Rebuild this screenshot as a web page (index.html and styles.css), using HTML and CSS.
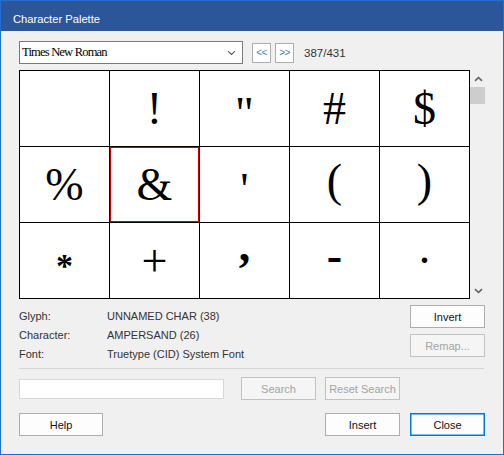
FILE: index.html
```html
<!DOCTYPE html>
<html>
<head>
<meta charset="utf-8">
<link rel="stylesheet" href="styles.css">
</head>
<body>
<div class="window">
  <div class="titlebar">Character Palette</div>
  <div class="content">
    <div class="toolbar">
      <div class="select">
        <span class="select-text">Times New Roman</span>
        <svg class="chev" width="9" height="6" viewBox="0 0 9 6"><path d="M1 1.2 L4.5 4.5 L8 1.2" fill="none" stroke="#555" stroke-width="1.1"/></svg>
      </div>
      <button class="nav">&lt;&lt;</button>
      <button class="nav nav-second">&gt;&gt;</button>
      <span class="count">387/431</span>
    </div>

    <div class="grid-row">
      <div class="grid">
        <div class="cell"></div>
        <div class="cell">!</div>
        <div class="cell g-quote">"</div>
        <div class="cell">#</div>
        <div class="cell">$</div>
        <div class="cell">%</div>
        <div class="cell selected">&amp;</div>
        <div class="cell g-quote">'</div>
        <div class="cell g-paren">(</div>
        <div class="cell g-paren">)</div>
        <div class="cell g-star">*</div>
        <div class="cell">+</div>
        <div class="cell g-comma">,</div>
        <div class="cell g-hyphen">-</div>
        <div class="cell g-period">.</div>
      </div>
      <div class="scrollbar">
        <div class="sb-arrow">
          <svg width="9" height="6" viewBox="0 0 9 6"><path d="M1 4.8 L4.5 1.5 L8 4.8" fill="none" stroke="#606060" stroke-width="1.6"/></svg>
        </div>
        <div class="sb-thumb"></div>
        <div class="sb-track"></div>
        <div class="sb-arrow">
          <svg width="9" height="6" viewBox="0 0 9 6"><path d="M1 1.2 L4.5 4.5 L8 1.2" fill="none" stroke="#606060" stroke-width="1.6"/></svg>
        </div>
      </div>
    </div>

    <div class="info-row">
      <div class="info">
        <div class="info-line"><span class="label">Glyph:</span><span class="value">UNNAMED CHAR (38)</span></div>
        <div class="info-line"><span class="label">Character:</span><span class="value">AMPERSAND (26)</span></div>
        <div class="info-line"><span class="label">Font:</span><span class="value">Truetype (CID) System Font</span></div>
      </div>
      <div class="side-buttons">
        <button class="btn">Invert</button>
        <button class="btn disabled">Remap...</button>
      </div>
    </div>

    <div class="separator"></div>

    <div class="search-row">
      <div class="search-input"></div>
      <button class="btn disabled search-btn">Search</button>
      <button class="btn disabled reset-btn">Reset Search</button>
    </div>

    <div class="bottom-row">
      <button class="btn help-btn">Help</button>
      <div class="bottom-right">
        <button class="btn">Insert</button>
        <button class="btn default">Close</button>
      </div>
    </div>
  </div>
</div>
</body>
</html>
```

FILE: styles.css
```css
* {
  box-sizing: border-box;
}

html, body {
  margin: 0;
  padding: 0;
  background: #f0f0f0;
}

.window {
  width: 504px;
  height: 455px;
  border: 1px solid #1f6fd4;
  background: #f0f0f0;
  font-family: "Liberation Sans", Arial, sans-serif;
  font-size: 11px;
  color: #222;
  display: flex;
  flex-direction: column;
}

.titlebar {
  height: 30px;
  background: #2b579a;
  color: #ffffff;
  padding: 12px 0 0 12px;
  line-height: 13px;
  font-size: 11.2px;
}

.content {
  padding: 10px 18px 0 18px;
  display: flex;
  flex-direction: column;
}

/* toolbar */
.toolbar {
  display: flex;
  align-items: center;
  height: 23px;
}

.select {
  width: 224px;
  height: 23px;
  background: #ffffff;
  border: 1px solid #7a7a7a;
  display: flex;
  align-items: center;
  justify-content: space-between;
  padding: 0 6px 0 2px;
}

.select-text {
  font-family: "Liberation Serif", "Times New Roman", serif;
  font-size: 12.5px;
  color: #000;
  letter-spacing: -0.8px;
}

.chev {
  display: block;
}

.nav {
  width: 19px;
  height: 20px;
  margin: 0 0 0 9px;
  padding: 0;
  border: 1px solid #adadad;
  background: #ffffff;
  font-family: "Liberation Sans", Arial, sans-serif;
  font-size: 10px;
  color: #4a7ab0;
  line-height: 18px;
  letter-spacing: -0.5px;
}

.nav-second {
  margin-left: 4px;
}

.count {
  margin-left: 10px;
  color: #333;
  font-size: 11.5px;
}

/* grid */
.grid-row {
  display: flex;
  margin-top: 6px;
}

.grid {
  display: grid;
  grid-template-columns: repeat(5, 90px);
  grid-template-rows: repeat(3, 76px);
  width: 451px;
  height: 229px;
  border-left: 1px solid #000;
  border-top: 1px solid #000;
  background: #ffffff;
}

.cell {
  border-right: 1px solid #000;
  border-bottom: 1px solid #000;
  display: flex;
  align-items: center;
  justify-content: center;
  font-family: "Liberation Serif", "Times New Roman", serif;
  font-size: 46px;
  line-height: 52px;
  color: #000;
}

.cell.selected {
  box-shadow: inset 0 0 0 1px #d40000;
}

/* per-glyph placement as drawn by the palette's font */
.g-quote {
  padding-top: 10px;
}

.g-paren {
  padding-bottom: 8px;
}

.g-star {
  font-size: 34px;
  line-height: 38px;
  font-weight: bold;
  padding-top: 10px;
}

.g-comma {
  padding-bottom: 30px;
  line-height: 30px;
  font-weight: bold;
}

.g-hyphen {
  font-weight: bold;
  padding-bottom: 10px;
  line-height: 40px;
}

.g-period {
  padding-bottom: 26px;
  line-height: 30px;
}

.scrollbar {
  width: 15px;
  height: 229px;
  display: flex;
  flex-direction: column;
}

.sb-arrow {
  height: 17px;
  display: flex;
  align-items: center;
  justify-content: center;
  padding-left: 1px;
}

.sb-thumb {
  height: 17px;
  background: #cdcdcd;
}

.sb-track {
  flex: 1;
}

/* info */
.info-row {
  display: flex;
  margin-top: 6px;
  height: 52px;
}

.info {
  flex: 1;
  padding-top: 2px;
}

.info-line {
  display: flex;
  line-height: 19px;
  color: #333;
}

.label {
  width: 88px;
}

.side-buttons {
  display: flex;
  flex-direction: column;
  gap: 6px;
}

.btn {
  width: 75px;
  height: 23px;
  padding: 0;
  margin: 0;
  border: 1px solid #adadad;
  background: #fdfdfd;
  font-family: "Liberation Sans", Arial, sans-serif;
  font-size: 11px;
  color: #111;
}

.btn.disabled {
  border-color: #c2c2c2;
  background: #f5f5f5;
  color: #a3a3a3;
}

.btn.default {
  border: 1px solid #0078d7;
  box-shadow: inset 0 0 0 0.5px #0078d7;
}

.separator {
  margin-top: 11px;
  margin-right: 1px;
  height: 1px;
  background: #d5d5d5;
}

.search-row {
  display: flex;
  align-items: center;
  margin-top: 8px;
  height: 23px;
}

.search-input {
  width: 205px;
  height: 20px;
  background: #ffffff;
  border: 1px solid #d7d7d7;
}

.search-btn {
  margin-left: 17px;
}

.reset-btn {
  margin-left: 9px;
}

.bottom-row {
  display: flex;
  justify-content: space-between;
  margin-top: 13px;
}

.help-btn {
  width: 84px;
}

.bottom-right {
  display: flex;
  gap: 10px;
}
```
